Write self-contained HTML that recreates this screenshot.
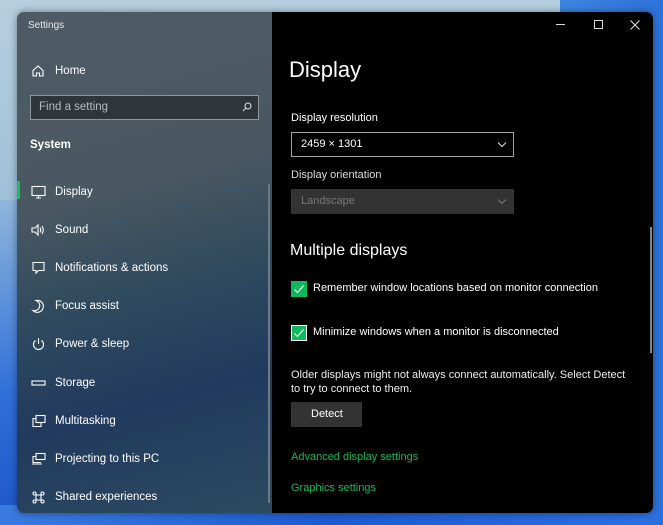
<!DOCTYPE html>
<html><head><meta charset="utf-8"><style>
*{margin:0;padding:0;box-sizing:border-box}
body{width:663px;height:525px;overflow:hidden;font-family:"Liberation Sans",sans-serif;position:relative;
background:linear-gradient(180deg,#b6cfdf 0%,#9fc0d8 40%,#5a93cf 70%,#2d6fd0 100%);}
.bloom{position:absolute;left:560px;top:0;width:200px;height:525px;background:linear-gradient(90deg,#3d86e0,#1f5fd0);}
.bl2{position:absolute;left:0;top:200px;width:30px;height:325px;background:linear-gradient(180deg,#8fb6dc,#2f6fd8 60%,#1e56c8);}
.bl3{position:absolute;left:0;top:505px;width:663px;height:20px;background:linear-gradient(90deg,#3a7be0,#1e5bd0 50%,#2c70e0)}
.win{position:absolute;left:17px;top:12px;width:636px;height:501px;border-radius:7px;overflow:hidden;box-shadow:0 0 8px rgba(0,0,0,.4)}
.side{position:absolute;left:0;top:0;width:255px;height:501px;color:#fff;
background:linear-gradient(165deg,#4e5b64 0%,#4a5862 35%,#2f4a5e 55%,#223a5e 75%,#2c4a60 100%);}
.main{position:absolute;left:255px;top:0;width:381px;height:501px;background:#000;color:#fff}
.t{position:absolute;white-space:nowrap}
.main .t{font-size:11px}
.nav{position:absolute;left:14px;font-size:11.5px;color:#fff}
.nav svg{position:absolute;left:0;top:-1px}
.nav span{position:absolute;left:24px;top:0;white-space:nowrap}
</style></head><body>
<div class="bloom"></div><div class="bl2"></div><div class="bl3"></div>
<div class="win">
<div class="side">
<div class="t" style="left:11px;top:8px;font-size:10px;color:#e8e8e8">Settings</div>
<div class="nav" style="top:53px"><svg width="14" height="14" viewBox="0 0 14 14" fill="none" stroke="#fff" stroke-width="1.1"><path d="M2 6.5L7 2l5 4.5V12H8.5V9h-3v3H2z"/></svg><span style="left:24px">Home</span></div>
<div style="position:absolute;left:13px;top:83px;width:229px;height:25px;border:1px solid #8d969c;background:#2e353b"></div>
<div class="t" style="left:22px;top:89px;font-size:11.5px;color:#b8bcbf">Find a setting</div>
<svg style="position:absolute;left:224px;top:89px" width="12" height="12" viewBox="0 0 12 12" fill="none" stroke="#ddd" stroke-width="1.1"><circle cx="7" cy="5" r="3"/><path d="M5 7L2 10"/></svg>
<div class="t" style="left:13px;top:127px;font-size:11.5px;font-weight:bold">System</div>
<div style="position:absolute;left:0;top:169px;width:3px;height:18px;background:#16c060"></div>
<div class="nav" style="top:174px"><svg width="15" height="14" viewBox="0 0 15 14" fill="none" stroke="#fff" stroke-width="1.1"><rect x="1" y="1.5" width="13" height="9"/><path d="M5 13h5M7.5 10.5v2.5"/></svg><span>Display</span></div>
<div class="nav" style="top:212px"><svg width="15" height="14" viewBox="0 0 15 14" fill="none" stroke="#fff" stroke-width="1.1"><path d="M1 5h3l3-3v10l-3-3H1z M9 4.5q1.5 2.5 0 5 M11 3q2.5 4 0 8"/></svg><span>Sound</span></div>
<div class="nav" style="top:250px"><svg width="15" height="14" viewBox="0 0 15 14" fill="none" stroke="#fff" stroke-width="1.1"><path d="M2 1.5h11v8H7.5L5 12V9.5H2z"/></svg><span>Notifications &amp; actions</span></div>
<div class="nav" style="top:288px"><svg width="15" height="14" viewBox="0 0 15 14" fill="none" stroke="#fff" stroke-width="1.1"><path d="M5 1.5a6 6 0 1 1-3 10 5 5 0 0 0 3-10z"/></svg><span>Focus assist</span></div>
<div class="nav" style="top:326px"><svg width="15" height="14" viewBox="0 0 15 14" fill="none" stroke="#fff" stroke-width="1.1"><path d="M7.5 1v6M4.5 3.5a5 5 0 1 0 6 0"/></svg><span>Power &amp; sleep</span></div>
<div class="nav" style="top:365px"><svg width="15" height="14" viewBox="0 0 15 14" fill="none" stroke="#fff" stroke-width="1.1"><rect x="1" y="5" width="13" height="4"/></svg><span>Storage</span></div>
<div class="nav" style="top:403px"><svg width="15" height="14" viewBox="0 0 15 14" fill="none" stroke="#fff" stroke-width="1.1"><rect x="5" y="1.5" width="9" height="7"/><path d="M5 4.5H2v8h8V8.5"/></svg><span>Multitasking</span></div>
<div class="nav" style="top:441px"><svg width="15" height="14" viewBox="0 0 15 14" fill="none" stroke="#fff" stroke-width="1.1"><rect x="5" y="1.5" width="9" height="6"/><path d="M5 4.5H2v6h8M1 12h10"/></svg><span>Projecting to this PC</span></div>
<div class="nav" style="top:479px"><svg width="15" height="14" viewBox="0 0 15 14" fill="none" stroke="#fff" stroke-width="1.1"><path d="M5 5h5v5H5z M5 5H3.5a1.5 1.5 0 1 1 1.5-1.5V5 M10 5V3.5A1.5 1.5 0 1 1 11.5 5H10 M10 10h1.5a1.5 1.5 0 1 1-1.5 1.5V10 M5 10v1.5A1.5 1.5 0 1 1 3.5 10H5"/></svg><span>Shared experiences</span></div>
<div style="position:absolute;left:251px;top:172px;width:2px;height:319px;background:#6d7a84"></div>
</div>
<div class="main">
<div style="position:absolute;left:284px;top:12px;width:9px;height:1px;background:#ddd"></div>
<div style="position:absolute;left:322px;top:8px;width:9px;height:9px;border:1px solid #ddd"></div>
<svg style="position:absolute;left:358px;top:8px" width="10" height="10" viewBox="0 0 10 10" stroke="#ddd" stroke-width="1.1"><path d="M0.5 .5l9 9M9.5 .5l-9 9"/></svg>
<div class="t" style="left:17px;top:45px;font-size:22px !important">Display</div>
<div class="t" style="left:19px;top:100px">Display resolution</div>
<div style="position:absolute;left:19px;top:120px;width:223px;height:25px;border:1px solid #a0a0a0"></div>
<div class="t" style="left:29px;top:126px">2459 × 1301</div>
<svg style="position:absolute;left:225px;top:129px" width="10" height="7" viewBox="0 0 10 7" fill="none" stroke="#ddd" stroke-width="1.1"><path d="M1 1.5l4 4 4-4"/></svg>
<div class="t" style="left:19px;top:157px;color:#ddd">Display orientation</div>
<div style="position:absolute;left:19px;top:177px;width:223px;height:25px;background:#333"></div>
<div class="t" style="left:29px;top:183px;color:#777">Landscape</div>
<svg style="position:absolute;left:225px;top:186px" width="10" height="7" viewBox="0 0 10 7" fill="none" stroke="#777" stroke-width="1.1"><path d="M1 1.5l4 4 4-4"/></svg>
<div class="t" style="left:18px;top:230px;font-size:16px !important">Multiple displays</div>
<div style="position:absolute;left:19px;top:269px;width:16px;height:16px;background:#0fb85a"></div>
<svg style="position:absolute;left:21px;top:271px" width="12" height="12" viewBox="0 0 12 12" fill="none" stroke="#fff" stroke-width="1.2"><path d="M1.5 6.5l3 3 6-7"/></svg>
<div class="t" style="left:41px;top:270px">Remember window locations based on monitor connection</div>
<div style="position:absolute;left:19px;top:313px;width:16px;height:16px;background:#0fb85a;border:1.5px solid #fff"></div>
<svg style="position:absolute;left:21px;top:315px" width="12" height="12" viewBox="0 0 12 12" fill="none" stroke="#fff" stroke-width="1.2"><path d="M1.5 6.5l3 3 6-7"/></svg>
<div class="t" style="left:41px;top:314px">Minimize windows when a monitor is disconnected</div>
<div class="t" style="left:19px;top:356px;line-height:14px;color:#eee">Older displays might not always connect automatically. Select Detect<br>to try to connect to them.</div>
<div style="position:absolute;left:19px;top:390px;width:71px;height:25px;background:#333"></div>
<div class="t" style="left:39px;top:396px">Detect</div>
<div class="t" style="left:19px;top:439px;color:#16b85a">Advanced display settings</div>
<div class="t" style="left:19px;top:470px;color:#16b85a">Graphics settings</div>
<div style="position:absolute;left:378px;top:215px;width:2px;height:126px;background:#888"></div>
</div>
</div>
</body></html>
